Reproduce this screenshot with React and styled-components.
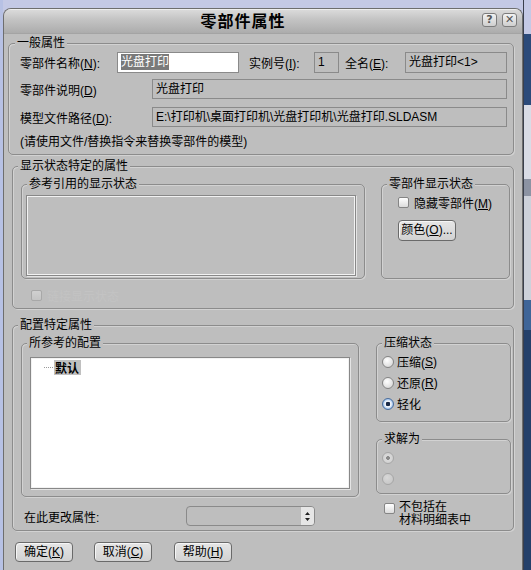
import React from 'react';
import styled, { createGlobalStyle } from 'styled-components';

const GlobalStyle = createGlobalStyle`
  html, body { margin: 0; padding: 0; background: #c4c9e5; }
  body {
    font-family: "Liberation Sans", "Noto Sans CJK SC", sans-serif;
    font-size: 12px;
    color: #000;
  }
  * { box-sizing: border-box; }
`;

const BG = '#bebebe';

const Desktop = styled.div`
  display: flex;
  width: 531px;
  height: 570px;
  overflow: hidden;
  background: #c4c9e5;
`;

const LeftStrip = styled.div`
  flex: none;
  width: 3px;
  background: #b7c1e4;
`;

const RightStrip = styled.div`
  flex: none;
  width: 8px;
  display: flex;
  flex-direction: column;
`;

const Patch = styled.div`
  flex: none;
  height: ${p => p.$h}px;
  background: ${p => p.$c};
  border-left: 1px solid #3a3f4c;
`;

const Window = styled.div`
  flex: none;
  width: 520px;
  height: 562px;
  margin-top: 8px;
  background: ${BG};
  border: 1px solid #6e6e6e;
  border-bottom: none;
  border-radius: 8px 8px 0 0;
  display: flex;
  flex-direction: column;
  overflow: hidden;
`;

const TitleBar = styled.div`
  flex: none;
  height: 25px;
  display: flex;
  align-items: flex-start;
  background: linear-gradient(#dadada, #c4c4c4 40%, #acacac);
  border-top: 1px solid #eeeeee;
  border-bottom: 1px solid #a4a4a4;
`;

const Title = styled.div`
  flex: 1;
  text-align: center;
  font-family: "Noto Sans CJK SC", sans-serif;
  font-weight: 700;
  font-size: 16px;
  letter-spacing: 1px;
  line-height: 21px;
`;

const CapButton = styled.div`
  flex: none;
  width: 15px;
  height: 14px;
  margin-top: 3px;
  margin-right: 5px;
  border: 1px solid #7c7c7c;
  border-radius: 3px;
  background: linear-gradient(#f2f2f2, #cfcfcf);
  color: #555;
  font-weight: 700;
  font-size: 11px;
  line-height: 12px;
  text-align: center;
  font-family: "DejaVu Sans", sans-serif;
`;

const Body = styled.div`
  display: flex;
  flex-direction: column;
`;

const Group = styled.div`
  position: relative;
  flex: none;
  width: ${p => p.$w}px;
  height: ${p => p.$h}px;
  margin-top: ${p => p.$mt || 0}px;
  margin-left: ${p => p.$ml || 0}px;
  padding: ${p => p.$pad || '0'};
  border: 1px solid #8c8c8c;
  border-radius: 5px;
  box-shadow: inset 1px 1px 0 #d2d2d2, 1px 1px 0 #d2d2d2;
`;

const Legend = styled.span`
  position: absolute;
  top: -8px;
  left: ${p => p.$l || 5}px;
  padding: 0 2px;
  background: ${BG};
  line-height: 14px;
  white-space: nowrap;
`;

const Row = styled.div`
  display: flex;
  align-items: center;
  height: ${p => p.$h || 20}px;
  margin-top: ${p => p.$mt || 0}px;
`;

const Label = styled.span`
  flex: none;
  width: ${p => p.$w}px;
  margin-left: ${p => p.$ml || 0}px;
  white-space: nowrap;
  color: ${p => (p.$faint ? '#c3c3c3' : '#000')};
`;

const Box = styled.div`
  flex: none;
  width: ${p => p.$w}px;
  height: ${p => p.$h || 20}px;
  border: 1px solid #8a8a8a;
  padding-left: 3px;
  line-height: ${p => (p.$h || 20) - 2}px;
  white-space: nowrap;
  overflow: hidden;
  background: ${p => (p.$edit ? '#ffffff' : 'transparent')};
`;

const Selected = styled.span`
  background: #7a7a7a;
  color: #fff;
  padding: 1px 0;
`;

const Note = styled.div`
  margin-top: 8px;
  line-height: 14px;
`;

const Flex = styled.div`
  display: flex;
  align-items: flex-start;
  margin-top: ${p => p.$mt || 0}px;
`;

const Column = styled.div`
  display: flex;
  flex-direction: column;
  flex: none;
  width: ${p => p.$w}px;
  margin-left: ${p => p.$ml || 0}px;
`;

const ListBox = styled.div`
  width: ${p => p.$w}px;
  height: ${p => p.$h}px;
  border: 1px solid #888;
  box-shadow: inset 1px 1px 0 #f2f2f2, inset -1px -1px 0 #f2f2f2, 1px 1px 0 #e4e4e4;
  background: ${p => (p.$white ? '#ffffff' : BG)};
  padding: ${p => p.$pad || '0'};
`;

const TreeItem = styled.div`
  display: flex;
  align-items: center;
  height: 15px;
`;

const Dots = styled.span`
  width: 9px;
  border-top: 1px dotted #9a9a9a;
  margin-right: 1px;
`;

const ItemText = styled.span`
  background: #c0c0c0;
  font-weight: 700;
  font-family: "Noto Sans CJK SC", sans-serif;
  line-height: 15px;
  padding: 0 2px 0 1px;
`;

const Check = styled.span`
  flex: none;
  display: inline-block;
  width: 11px;
  height: 11px;
  margin-left: ${p => p.$ml || 0}px;
  margin-right: ${p => p.$mr || 5}px;
  margin-top: ${p => p.$mt || 0}px;
  border: 1px solid ${p => (p.$disabled ? '#a8a8a8' : '#858585')};
  border-radius: 2px;
  background: ${p => (p.$disabled ? 'linear-gradient(#d0d0d0, #c4c4c4)' : 'linear-gradient(#ffffff, #dcdcdc)')};
`;

const Radio = styled.span`
  flex: none;
  display: inline-block;
  width: 12px;
  height: 12px;
  margin-right: 3px;
  border-radius: 50%;
  border: 1px solid ${p => (p.$disabled ? '#a6a6a6' : p.$on ? '#4a6d9c' : '#848484')};
  background: ${p =>
    p.$on && p.$disabled
      ? 'radial-gradient(circle, #8a8a8a 0 1.6px, #dadada 2.2px, #cacaca)'
      : p.$on
        ? 'radial-gradient(circle, #1a2a48 0 2px, #ffffff 2.6px, #9cc0ec 5px)'
        : p.$disabled
          ? 'radial-gradient(circle at 40% 35%, #d8d8d8, #c2c2c2)'
          : 'radial-gradient(circle at 40% 35%, #ffffff, #cfcfcf)'};
`;

const RadioRow = styled.div`
  display: flex;
  align-items: center;
  height: 21px;
  padding-left: 5px;
`;

const Button = styled.div`
  flex: none;
  width: ${p => p.$w || 58}px;
  height: ${p => p.$h || 20}px;
  margin-left: ${p => p.$ml || 0}px;
  margin-top: ${p => p.$mt || 0}px;
  border: 1px solid #6a6a6a;
  border-radius: 4px;
  background: linear-gradient(#e6e6e6, #d2d2d2);
  box-shadow: inset 1px 1px 0 #f6f6f6;
  line-height: ${p => (p.$h || 20) - 2}px;
  text-align: center;
  white-space: nowrap;
`;

const Combo = styled.div`
  display: flex;
  width: 129px;
  height: 20px;
  border: 1px solid #8a8a8a;
  border-radius: 4px;
  overflow: hidden;
`;

const ComboField = styled.div`
  flex: 1;
`;

const Spinner = styled.div`
  width: 14px;
  display: flex;
  align-items: center;
  justify-content: center;
  background: #e6e6e6;
  border-left: 1px solid #bdbdbd;
`;

const TwoLines = styled.div`
  display: flex;
  flex-direction: column;
  margin-top: -1px;
`;

const Line = styled.span`
  display: block;
  height: 13px;
  line-height: 13px;
  white-space: nowrap;
`;

const ButtonRow = styled.div`
  display: flex;
  margin-top: 11px;
  padding-left: 11px;
`;

const App = () => (
  <>
    <GlobalStyle />
    <Desktop>
      <LeftStrip />
      <Window>
        <TitleBar>
          <Title>零部件属性</Title>
          <CapButton>?</CapButton>
          <CapButton>✕</CapButton>
        </TitleBar>

        <Body>
          <Group $w={506} $h={112} $mt={9} $ml={4} $pad="8px 0 0 11px">
            <Legend $l={6}>一般属性</Legend>
            <Row $h={21}>
              <Label $w={97}>零部件名称(<u>N</u>):</Label>
              <Box $w={122} $h={21} $edit><Selected>光盘打印</Selected></Box>
              <Label $w={65} $ml={10}>实例号(<u>I</u>):</Label>
              <Box $w={25} $h={21}>1</Box>
              <Label $w={60} $ml={6}>全名(<u>E</u>):</Label>
              <Box $w={102} $h={21}>光盘打印&lt;1&gt;</Box>
            </Row>
            <Row $mt={6}>
              <Label $w={132}>零部件说明(<u>D</u>)</Label>
              <Box $w={355}>光盘打印</Box>
            </Row>
            <Row $mt={8}>
              <Label $w={132}>模型文件路径(<u>D</u>):</Label>
              <Box $w={355}>E:\打印机\桌面打印机\光盘打印机\光盘打印.SLDASM</Box>
            </Row>
            <Note>(请使用文件/替换指令来替换零部件的模型)</Note>
          </Group>

          <Group $w={502} $h={143} $mt={11} $ml={8} $pad="17px 0 0 8px">
            <Legend>显示状态特定的属性</Legend>
            <Flex>
              <Group $w={344} $h={95} $pad="10px 0 0 4px">
                <Legend>参考引用的显示状态</Legend>
                <ListBox $w={330} $h={81} />
              </Group>
              <Group $w={129} $h={95} $ml={16} $pad="11px 0 0 16px">
                <Legend>零部件显示状态</Legend>
                <Row $h={12}>
                  <Check />
                  <Label $w={90}>隐藏零部件(<u>M</u>)</Label>
                </Row>
                <Button $w={58} $h={21} $mt={12}>颜色(<u>O</u>)...</Button>
              </Group>
            </Flex>
            <Row $h={12} $mt={10}>
              <Check $ml={10} $disabled />
              <Label $w={100} $faint>链接显示状态</Label>
            </Row>
          </Group>

          <Group $w={502} $h={206} $mt={16} $ml={8} $pad="17px 0 0 8px">
            <Legend>配置特定属性</Legend>
            <Flex>
              <Column $w={338}>
                <Group $w={338} $h={154} $pad="13px 0 0 8px">
                  <Legend>所参考的配置</Legend>
                  <ListBox $w={320} $h={132} $white $pad="2px 0 0 13px">
                    <TreeItem>
                      <Dots />
                      <ItemText>默认</ItemText>
                    </TreeItem>
                  </ListBox>
                </Group>
                <Row $mt={9}>
                  <Label $w={162} $ml={3}>在此更改属性:</Label>
                  <Combo>
                    <ComboField />
                    <Spinner>
                      <svg width="5" height="9" viewBox="0 0 5 9">
                        <path d="M2.5 0 L5 3 L0 3 Z M0 6 L5 6 L2.5 9 Z" fill="#222" />
                      </svg>
                    </Spinner>
                  </Combo>
                </Row>
              </Column>

              <Column $w={135} $ml={17}>
                <Group $w={135} $h={79} $pad="7px 0 0 0">
                  <Legend>压缩状态</Legend>
                  <RadioRow><Radio />压缩(<u>S</u>)</RadioRow>
                  <RadioRow><Radio />还原(<u>R</u>)</RadioRow>
                  <RadioRow><Radio $on />轻化</RadioRow>
                </Group>
                <Group $w={135} $h={55} $mt={17} $pad="7px 0 0 0">
                  <Legend>求解为</Legend>
                  <RadioRow><Radio $on $disabled /></RadioRow>
                  <RadioRow><Radio $disabled /></RadioRow>
                </Group>
                <Flex $mt={8}>
                  <Check $ml={8} $mr={4} $mt={1} />
                  <TwoLines>
                    <Line>不包括在</Line>
                    <Line>材料明细表中</Line>
                  </TwoLines>
                </Flex>
              </Column>
            </Flex>
          </Group>

          <ButtonRow>
            <Button>确定(<u>K</u>)</Button>
            <Button $ml={21}>取消(<u>C</u>)</Button>
            <Button $ml={22}>帮助(<u>H</u>)</Button>
          </ButtonRow>
        </Body>
      </Window>
      <RightStrip>
        <Patch $h={34} $c="#c4c9e5" />
        <Patch $h={71} $c="#2b4a7a" />
        <Patch $h={74} $c="#d9dce6" />
        <Patch $h={17} $c="#8c93a3" />
        <Patch $h={104} $c="#cdd1da" />
        <Patch $h={30} $c="#3f6598" />
        <Patch $h={240} $c="#24406a" />
      </RightStrip>
    </Desktop>
  </>
);

export default App;
